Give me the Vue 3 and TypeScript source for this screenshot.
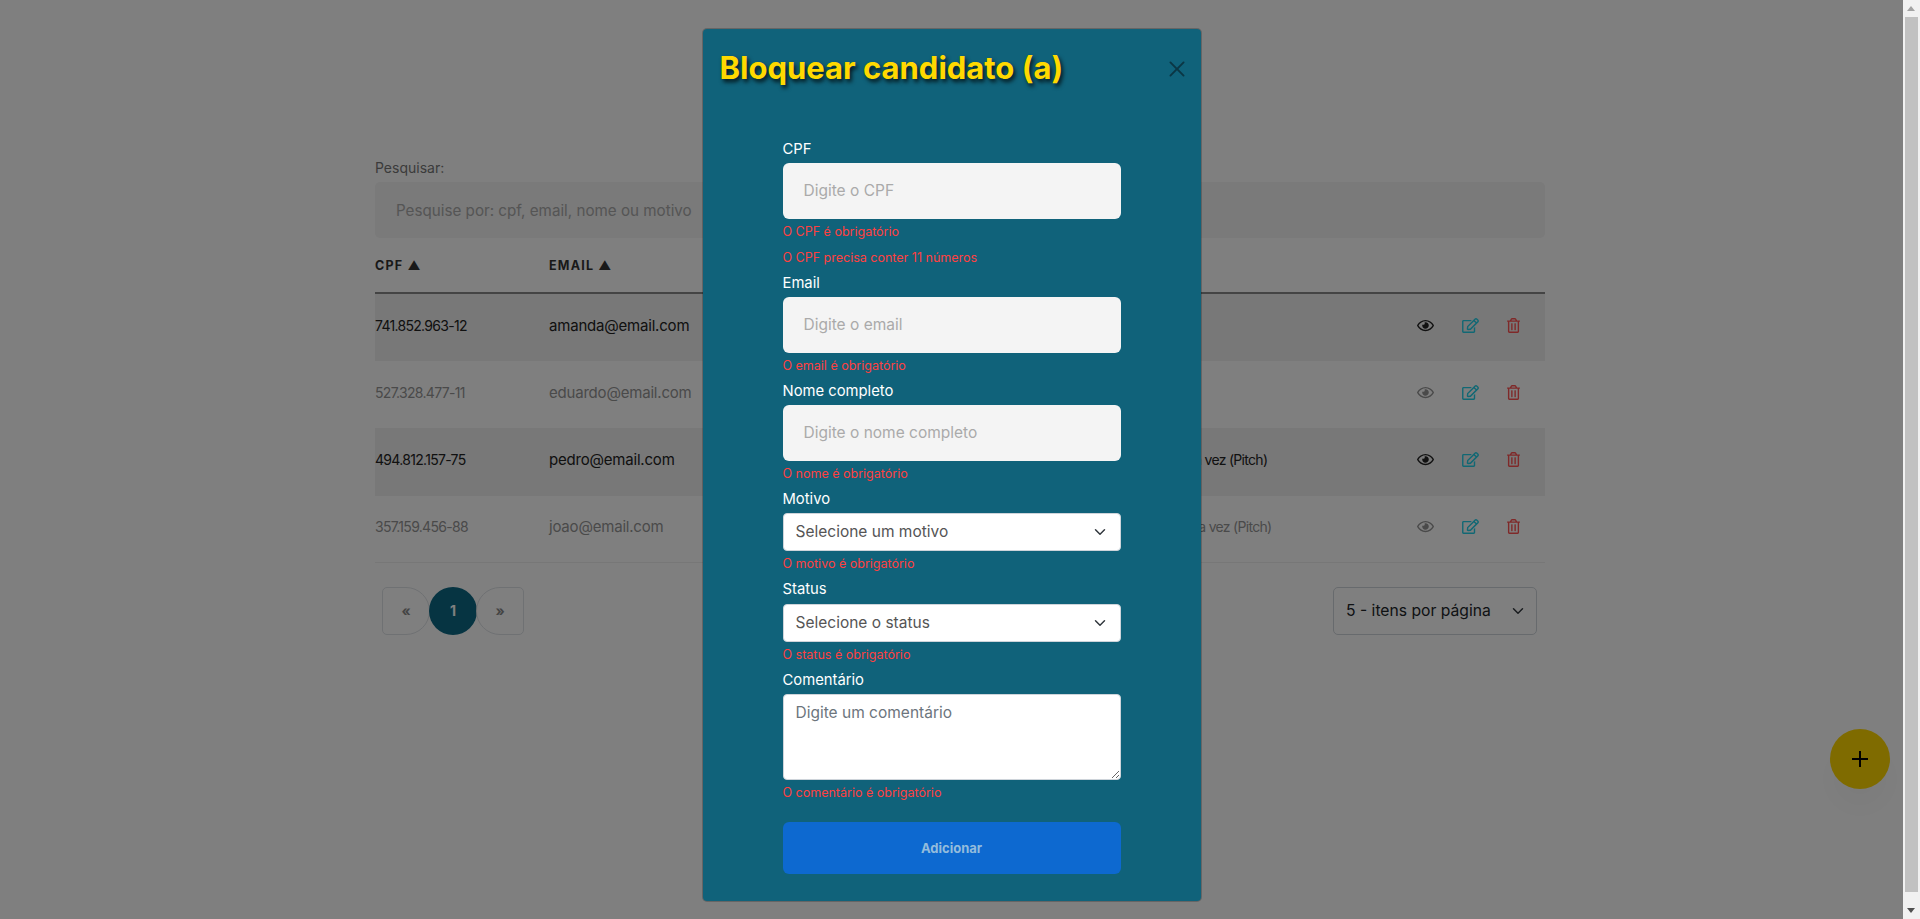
<script setup lang="ts">
interface Candidate {
  cpf: string
  email: string
  nome: string
  motivo: string
}

const candidates: Candidate[] = [
  { cpf: '741.852.963-12', email: 'amanda@email.com', nome: 'Amanda Souza', motivo: 'Fraude' },
  { cpf: '527.328.477-11', email: 'eduardo@email.com', nome: 'Eduardo Lima', motivo: 'Fraude' },
  { cpf: '494.812.157-75', email: 'pedro@email.com', nome: 'Pedro Alves', motivo: 'Não compareceu mais de uma vez (Pitch)' },
  { cpf: '357.159.456-88', email: 'joao@email.com', nome: 'João Silva', motivo: 'Nem compareceu mais de uma vez (Pitch)' },
]

const inputs = [
  { label: 'CPF', placeholder: 'Digite o CPF', errors: ['O CPF é obrigatório', 'O CPF precisa conter 11 números'] },
  { label: 'Email', placeholder: 'Digite o email', errors: ['O email é obrigatório'] },
  { label: 'Nome completo', placeholder: 'Digite o nome completo', errors: ['O nome é obrigatório'] },
]

const selects = [
  { label: 'Motivo', placeholder: 'Selecione um motivo', error: 'O motivo é obrigatório' },
  { label: 'Status', placeholder: 'Selecione o status', error: 'O status é obrigatório' },
]
</script>

<template>
  <div class="app">
    <div class="page">
      <main class="content">
        <label class="search-label">Pesquisar:</label>
        <input class="search" placeholder="Pesquise por: cpf, email, nome ou motivo" />

        <div class="table">
          <div class="row head">
            <span>CPF ▲</span>
            <span>EMAIL ▲</span>
            <span>NOME ▲</span>
            <span>MOTIVO ▲</span>
            <span />
          </div>
          <div v-for="c in candidates" :key="c.cpf" class="row body-row">
            <span class="cpf">{{ c.cpf }}</span>
            <span>{{ c.email }}</span>
            <span>{{ c.nome }}</span>
            <span class="motivo">{{ c.motivo }}</span>
            <div class="actions">
              <svg class="ic eye" viewBox="0 0 576 512">
                <path fill="currentColor" d="M288 144a110.94 110.94 0 0 0-31.24 5 55.4 55.4 0 0 1 7.24 27 56 56 0 0 1-56 56 55.4 55.4 0 0 1-27-7.24A111.71 111.71 0 1 0 288 144zm284.52 97.4C518.29 135.59 410.93 64 288 64S57.68 135.64 3.48 241.41a32.35 32.35 0 0 0 0 29.19C57.71 376.41 165.07 448 288 448s230.32-71.64 284.52-177.41a32.35 32.35 0 0 0 0-29.19zM288 400c-98.65 0-189.09-55-237.93-144C98.91 167 189.34 112 288 112s189.09 55 237.93 144C477.1 345 386.66 400 288 400z" />
              </svg>
              <svg class="ic edit" viewBox="0 0 576 512">
                <path fill="currentColor" d="M402.3 344.9l32-32c5-5 13.7-1.5 13.7 5.7V464c0 26.5-21.5 48-48 48H48c-26.5 0-48-21.5-48-48V112c0-26.5 21.5-48 48-48h273.5c7.1 0 10.7 8.6 5.7 13.7l-32 32c-1.5 1.5-3.5 2.3-5.7 2.3H48v352h352V350.5c0-2.1.8-4.1 2.3-5.6zm156.6-201.8L296.3 405.7l-90.4 10c-26.2 2.9-48.5-19.2-45.6-45.6l10-90.4L432.9 17.1c22.9-22.9 59.9-22.9 82.7 0l43.2 43.2c22.9 22.9 22.9 60 .1 82.8zM460.1 174L402 115.9 216.2 301.8l-7.3 65.3 65.3-7.3L460.1 174zm64.8-79.7l-43.2-43.2c-4.1-4.1-10.8-4.1-14.8 0L436 82l58.1 58.1 30.9-30.9c4-4.2 4-10.8-.1-14.9z" />
              </svg>
              <svg class="ic trash" viewBox="0 0 448 512">
                <path fill="currentColor" d="M268 416h24a12 12 0 0 0 12-12V188a12 12 0 0 0-12-12h-24a12 12 0 0 0-12 12v216a12 12 0 0 0 12 12zM432 80h-82.41l-34-56.7A48 48 0 0 0 274.41 0H173.59a48 48 0 0 0-41.16 23.3L98.41 80H16A16 16 0 0 0 0 96v16a16 16 0 0 0 16 16h16v336a48 48 0 0 0 48 48h288a48 48 0 0 0 48-48V128h16a16 16 0 0 0 16-16V96a16 16 0 0 0-16-16zM171.84 50.91A6 6 0 0 1 177 48h94a6 6 0 0 1 5.15 2.91L293.61 80H154.39zM368 464H80V128h288zm-212-48h24a12 12 0 0 0 12-12V188a12 12 0 0 0-12-12h-24a12 12 0 0 0-12 12v216a12 12 0 0 0 12 12z" />
              </svg>
            </div>
          </div>
        </div>

        <div class="table-foot">
          <nav class="pager">
            <a class="prev">«</a>
            <a class="current">1</a>
            <a class="next">»</a>
          </nav>
          <select class="per-page">
            <option>5 - itens por página</option>
          </select>
        </div>
      </main>

      <button class="fab">
        <svg width="20" height="20" viewBox="0 0 20 20">
          <path d="M10 2v16M2 10h16" stroke="#000" stroke-width="2" fill="none" />
        </svg>
      </button>

      <div class="backdrop">
        <section class="modal">
          <header class="modal-head">
            <h1>Bloquear candidato (a)</h1>
            <button class="close" aria-label="Fechar">
              <svg width="16" height="16" viewBox="0 0 16 16">
                <path fill="currentColor" d="M.293.293a1 1 0 0 1 1.414 0L8 6.586 14.293.293a1 1 0 1 1 1.414 1.414L9.414 8l6.293 6.293a1 1 0 0 1-1.414 1.414L8 9.414l-6.293 6.293a1 1 0 0 1-1.414-1.414L6.586 8 .293 1.707a1 1 0 0 1 0-1.414z" transform="translate(8 8) scale(.94) translate(-8 -8)" />
              </svg>
            </button>
          </header>

          <form class="form" @submit.prevent>
            <div v-for="f in inputs" :key="f.label">
              <label>{{ f.label }}</label>
              <input class="text-input" :placeholder="f.placeholder" />
              <p v-for="e in f.errors" :key="e" class="error">{{ e }}</p>
            </div>
            <div v-for="s in selects" :key="s.label" class="select-field">
              <label>{{ s.label }}</label>
              <select class="form-select">
                <option>{{ s.placeholder }}</option>
              </select>
              <p class="error">{{ s.error }}</p>
            </div>
            <div>
              <label>Comentário</label>
              <textarea class="comment" placeholder="Digite um comentário" />
              <p class="error">O comentário é obrigatório</p>
            </div>
            <button class="submit" type="submit">Adicionar</button>
          </form>
        </section>
      </div>
    </div>

    <aside class="scrollbar">
      <span class="arrow up" />
      <span class="thumb" />
      <span class="arrow down" />
    </aside>
  </div>
</template>

<style>
html, body {
  margin: 0;
  overflow: hidden;
}
</style>

<style scoped>
* {
  box-sizing: border-box;
}

.app {
  display: flex;
  height: 919px;
  font-family: Inter, "Liberation Sans", sans-serif;
  color: #212529;
  background: #fff;
}

.page {
  position: relative;
  width: 1903px;
  height: 919px;
  overflow: hidden;
}

.content {
  width: 1170px;
  margin-left: 375px;
  padding-top: 156px;
}

.search-label {
  display: block;
  height: 26px;
  font-size: 14px;
  line-height: 24px;
  color: #777;
}

.search {
  display: block;
  width: 100%;
  height: 56px;
  padding: 0 21px;
  border: 0;
  border-radius: 5px;
  background: #f4f4f4;
  font: 15.2px Inter, sans-serif;
}

.search::placeholder {
  color: #aaa;
}

.row {
  display: grid;
  grid-template-columns: 174px 226px 243px 1fr 160px;
  align-items: center;
  height: 67.2px;
  padding-bottom: 5px;
  font-size: 15px;
  color: #949494;
  white-space: nowrap;
}

.row span {
  letter-spacing: -.2px;
}

.row .cpf {
  font-size: 14px;
  letter-spacing: -.7px;
}

.row .motivo {
  font-size: 14px;
  letter-spacing: -.7px;
}

.row.head {
  height: 56px;
  padding-bottom: 0;
  font-size: 12.5px;
  font-weight: 700;
  color: #333;
  border-bottom: 2px solid #888;
}

.head span {
  letter-spacing: 1.2px;
}

.body-row:nth-child(even) {
  background: #f0f0f0;
  color: #222;
}

.body-row:last-child {
  border-bottom: 1px solid #eee;
}

.actions {
  display: flex;
  justify-content: flex-end;
  gap: 28px;
  padding-right: 25px;
  color: #949494;
}

.body-row:nth-child(even) .actions {
  color: #222;
}

.ic {
  height: 15px;
}

.eye {
  width: 17px;
}

.edit {
  width: 17px;
  color: #22d0e8;
}

.trash {
  width: 13px;
  color: #ff5252;
}

.table-foot {
  display: flex;
  justify-content: space-between;
  margin-top: 24px;
  padding: 0 8px 0 7px;
}

.pager {
  display: flex;
}

.pager a {
  display: flex;
  align-items: center;
  justify-content: center;
  width: 48px;
  height: 48px;
  margin-left: -1px;
  font-size: 14px;
  font-weight: 700;
  color: #888;
  border: 1px solid #dee2e6;
}

.pager .prev {
  margin-left: 0;
  border-radius: 5px 50% 50% 5px;
}

.pager .next {
  border-radius: 50% 5px 5px 50%;
}

.pager .current {
  border-radius: 50%;
  border: 0;
  background: #0c6884;
  color: #fff;
}

.per-page {
  width: 204px;
  height: 48px;
  padding: 0 36px 0 12px;
  border: 1px solid #ced4da;
  border-radius: 5px;
  appearance: none;
  background: #fff url("data:image/svg+xml,%3csvg xmlns='http://www.w3.org/2000/svg' viewBox='0 0 16 16'%3e%3cpath fill='none' stroke='%23343a40' stroke-linecap='round' stroke-linejoin='round' stroke-width='2' d='M2 5l6 6 6-6'/%3e%3c/svg%3e") no-repeat right 12px center / 12px 12px;
  font: 15.7px Inter, sans-serif;
  color: #212529;
}

.fab {
  position: absolute;
  left: 1830px;
  top: 729px;
  display: flex;
  align-items: center;
  justify-content: center;
  width: 60px;
  height: 60px;
  padding: 0;
  border: 0;
  border-radius: 50%;
  background: #ffd700;
  box-shadow: 0 20px 30px rgba(0, 0, 0, .03);
}

.backdrop {
  position: absolute;
  inset: 0;
  display: flex;
  justify-content: center;
  align-items: flex-start;
  padding-top: 28px;
  background: rgba(0, 0, 0, .5);
}

.modal {
  width: 500px;
  height: 874px;
  border: 1px solid rgba(0, 0, 0, .2);
  border-radius: 5px;
  background: #10627a;
  background-clip: padding-box;
}

.modal-head {
  display: flex;
  justify-content: space-between;
  align-items: flex-start;
  height: 108px;
  padding: 17px 16px 0 17px;
}

.modal-head h1 {
  margin: 0;
  font-size: 31px;
  line-height: 44px;
  font-weight: 700;
  color: #ffd900;
  text-shadow: 2px 3px 4px rgba(0, 0, 0, .8);
}

.close {
  width: 16px;
  height: 16px;
  margin-top: 15px;
  padding: 0;
  border: 0;
  background: none;
  color: #0b3644;
}

.form {
  padding: 0 80px;
}

.form label {
  display: block;
  height: 26px;
  font-size: 14.8px;
  line-height: 24px;
  color: #fff;
}

.text-input {
  display: block;
  width: 100%;
  height: 56px;
  padding: 0 21px 2px;
  border: 0;
  border-radius: 6px;
  background: #f4f4f4;
  font: 15.5px Inter, sans-serif;
}

.text-input::placeholder {
  color: #aaa;
}

.error {
  margin: 0;
  padding: 4px 0;
  height: 26px;
  font-size: 12.5px;
  line-height: 18px;
  color: #ff4040;
}

.form-select {
  display: block;
  width: 100%;
  height: 38px;
  padding: 0 36px 2px 12px;
  border: 1px solid #ced4da;
  border-radius: 4px;
  appearance: none;
  background: #fff url("data:image/svg+xml,%3csvg xmlns='http://www.w3.org/2000/svg' viewBox='0 0 16 16'%3e%3cpath fill='none' stroke='%23343a40' stroke-linecap='round' stroke-linejoin='round' stroke-width='2' d='M2 5l6 6 6-6'/%3e%3c/svg%3e") no-repeat right 14px center / 12px 12px;
  font: 15.5px Inter, sans-serif;
  color: #555;
}

.select-field + .select-field .form-select {
  margin-top: 1px;
}

.comment {
  display: block;
  width: 100%;
  height: 86px;
  padding: 6px 12px;
  border: 1px solid #ced4da;
  border-radius: 4px;
  background: #fff;
  font: 15.5px/24px Inter, sans-serif;
}

.comment::placeholder {
  color: #6c757d;
}

.submit {
  display: block;
  width: 100%;
  height: 52px;
  margin-top: 16px;
  border: 0;
  border-radius: 6px;
  background: #0d69d0;
  font: 700 13px Inter, sans-serif;
  color: #93bcdc;
}

.scrollbar {
  position: relative;
  width: 17px;
  height: 919px;
  background: #f1f1f1;
}

.thumb {
  position: absolute;
  top: 17px;
  left: 2px;
  width: 13px;
  height: 875px;
  background: #c1c1c1;
}

.arrow {
  position: absolute;
  left: 4px;
  border-left: 4.5px solid transparent;
  border-right: 4.5px solid transparent;
}

.up {
  top: 6px;
  border-bottom: 5px solid #a3a3a3;
}

.down {
  bottom: 6px;
  border-top: 5px solid #505050;
}
</style>
